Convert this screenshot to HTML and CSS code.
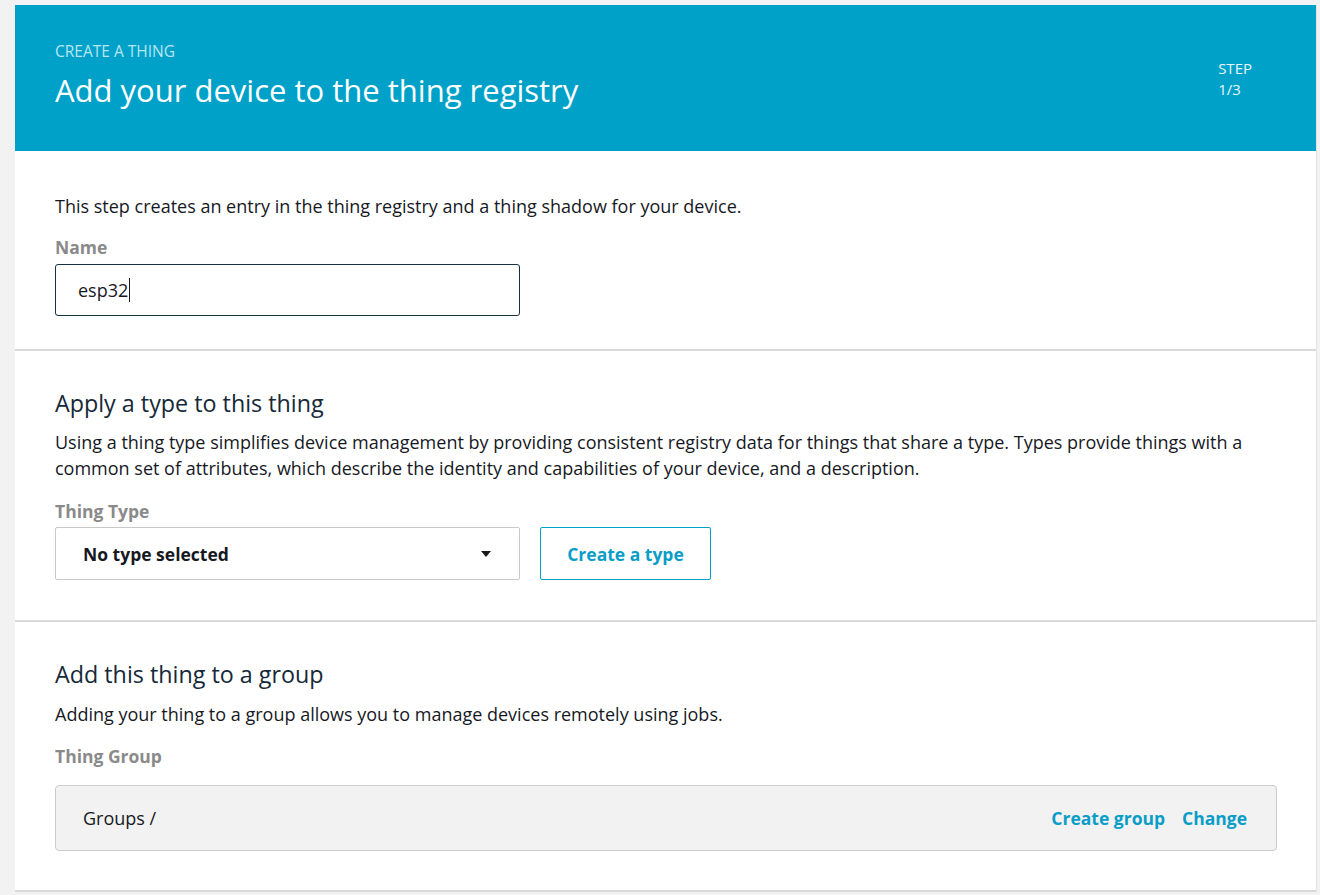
FILE: index.html
```html
<!DOCTYPE html>
<html>
<head>
<meta charset="utf-8">
<link rel="stylesheet" href="styles.css">
</head>
<body>
<div class="card">
  <header class="hero">
    <div class="hero-text">
      <div class="eyebrow">CREATE A THING</div>
      <h1 class="title">Add your device to the thing registry</h1>
    </div>
    <div class="step"><div>STEP</div><div>1/3</div></div>
  </header>

  <section class="section s1">
    <p class="intro">This step creates an entry in the thing registry and a thing shadow for your device.</p>
    <label class="label l-name">Name</label>
    <div class="input"><span>esp32</span><span class="caret"></span></div>
  </section>

  <section class="section s2">
    <h2 class="heading">Apply a type to this thing</h2>
    <p class="desc">Using a thing type simplifies device management by providing consistent registry data for things that share a type. Types provide things with a common set of attributes, which describe the identity and capabilities of your device, and a description.</p>
    <label class="label l-type">Thing Type</label>
    <div class="type-row">
      <div class="select">
        <span>No type selected</span>
        <svg class="arrow" width="10" height="6" viewBox="0 0 10 6"><path d="M0 0h10L5 6z" fill="#16191f"/></svg>
      </div>
      <button class="btn">Create a type</button>
    </div>
  </section>

  <section class="section s3">
    <h2 class="heading">Add this thing to a group</h2>
    <p class="desc d3">Adding your thing to a group allows you to manage devices remotely using jobs.</p>
    <label class="label l-group">Thing Group</label>
    <div class="groupbox">
      <span class="crumb">Groups /</span>
      <div class="links">
        <a class="link">Create group</a>
        <a class="link">Change</a>
      </div>
    </div>
  </section>
</div>
</body>
</html>
```

FILE: styles.css
```css
html, body {
  margin: 0;
  padding: 0;
  background: #f2f2f2;
  font-family: "Open Sans", "Noto Sans", sans-serif;
  color: #16191f;
}

.card {
  margin: 5px 3px 0 15px;
  background: #ffffff;
  border-right: 1px solid #e3e3e3;
}

.hero {
  background: #00a1c9;
  color: #ffffff;
  display: flex;
  justify-content: space-between;
  align-items: flex-start;
  padding: 37px 64px 41px 40px;
  height: 146px;
  box-sizing: border-box;
}

.eyebrow {
  font-size: 15.5px;
  line-height: 18px;
  color: #b8e6f3;
}

.title {
  margin: 10px 0 0 0;
  font-size: 31px;
  line-height: 40px;
  font-weight: 400;
  color: #ffffff;
}

.step {
  margin-top: 16px;
  font-size: 15px;
  line-height: 21px;
  color: #e6f6fb;
}

.section {
  padding: 0 40px;
  border-bottom: 2px solid #d9d9d9;
}

.s1 { padding-top: 43px; padding-bottom: 33px; }
.s2 { padding-top: 37px; padding-bottom: 40px; }
.s3 { padding-top: 37px; padding-bottom: 39px; }

.intro {
  margin: 0;
  font-size: 18px;
  line-height: 24px;
}

.label {
  display: block;
  font-size: 17.5px;
  line-height: 20px;
  font-weight: 700;
  color: #8a8a8a;
}

.l-name { margin-top: 19px; margin-bottom: 7px; }
.l-type { margin-top: 20px; margin-bottom: 6px; }
.l-group { margin-top: 19px; margin-bottom: 19px; }

.input {
  width: 465px;
  height: 52px;
  box-sizing: border-box;
  border: 1px solid #16313f;
  border-radius: 3px;
  padding-left: 22px;
  display: flex;
  align-items: center;
  font-size: 18px;
}

.caret {
  display: inline-block;
  width: 1px;
  height: 24px;
  background: #16191f;
  margin-left: 1px;
}

.heading {
  margin: 0;
  font-size: 23.3px;
  line-height: 30px;
  font-weight: 400;
  color: #152939;
}

.desc {
  margin: 11px 0 0 0;
  font-size: 18px;
  line-height: 26px;
}

.d3 { margin-top: 12px; }

.type-row {
  display: flex;
  gap: 20px;
}

.select {
  width: 465px;
  height: 53px;
  box-sizing: border-box;
  border: 1px solid #c9c9c9;
  border-radius: 2px;
  padding: 0 27px 0 27px;
  display: flex;
  align-items: center;
  justify-content: space-between;
  font-size: 17.5px;
  font-weight: 700;
  color: #16191f;
}

.arrow { margin-right: 1px; }

.btn {
  width: 171px;
  height: 53px;
  box-sizing: border-box;
  border: 1px solid #00a1c9;
  border-radius: 2px;
  background: #ffffff;
  color: #0a9dc7;
  font-family: "Open Sans", "Noto Sans", sans-serif;
  font-size: 17.5px;
  font-weight: 700;
  padding: 0;
}

.groupbox {
  width: 1222px;
  height: 66px;
  box-sizing: border-box;
  background: #f2f2f2;
  border: 1px solid #cccccc;
  border-radius: 4px;
  display: flex;
  align-items: center;
  justify-content: space-between;
  padding: 0 29px 0 27px;
  font-size: 18px;
}

.crumb { color: #16191f; }

.links {
  display: flex;
  gap: 17px;
}

.link {
  color: #0a9dc7;
  font-size: 17.5px;
  font-weight: 700;
  cursor: pointer;
}
```
